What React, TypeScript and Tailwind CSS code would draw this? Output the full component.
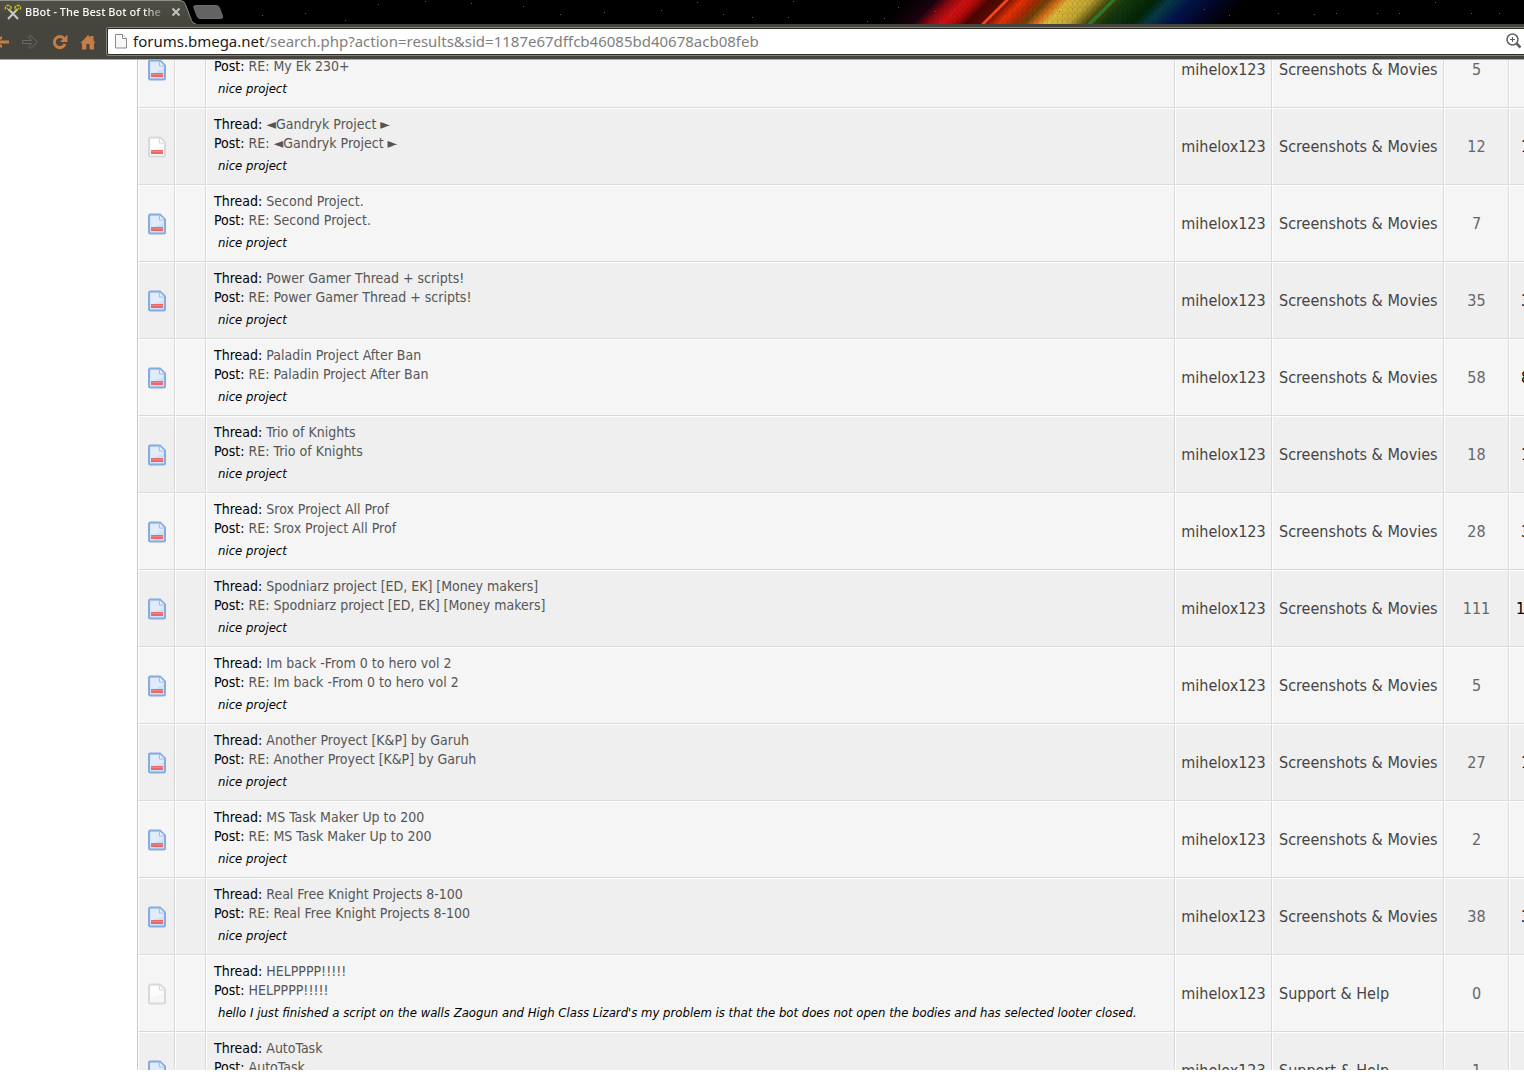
import { useState } from "react";
import { clsx } from "clsx";

type Icon = "hot" | "dotOld" | "old";

interface Result {
  title?: string;
  post: string;
  preview?: string;
  forum: string;
  replies: number;
  views?: string;
  strong?: boolean;
  icon: Icon;
}

const SM = "Screenshots & Movies";
const NP = "nice project";

const results: Result[] = [
  { post: "RE: My Ek 230+", preview: NP, forum: SM, replies: 5, icon: "hot" },
  { title: "◄Gandryk Project ►", post: "RE: ◄Gandryk Project ►", preview: NP, forum: SM, replies: 12, views: "1", icon: "dotOld" },
  { title: "Second Project.", post: "RE: Second Project.", preview: NP, forum: SM, replies: 7, icon: "hot" },
  { title: "Power Gamer Thread + scripts!", post: "RE: Power Gamer Thread + scripts!", preview: NP, forum: SM, replies: 35, views: "3", icon: "hot" },
  { title: "Paladin Project After Ban", post: "RE: Paladin Project After Ban", preview: NP, forum: SM, replies: 58, views: "8", icon: "hot" },
  { title: "Trio of Knights", post: "RE: Trio of Knights", preview: NP, forum: SM, replies: 18, views: "1", icon: "hot" },
  { title: "Srox Project All Prof", post: "RE: Srox Project All Prof", preview: NP, forum: SM, replies: 28, views: "3", icon: "hot" },
  { title: "Spodniarz project [ED, EK] [Money makers]", post: "RE: Spodniarz project [ED, EK] [Money makers]", preview: NP, forum: SM, replies: 111, views: "1", strong: true, icon: "hot" },
  { title: "Im back -From 0 to hero vol 2", post: "RE: Im back -From 0 to hero vol 2", preview: NP, forum: SM, replies: 5, icon: "hot" },
  { title: "Another Proyect [K&P] by Garuh", post: "RE: Another Proyect [K&P] by Garuh", preview: NP, forum: SM, replies: 27, views: "1", icon: "hot" },
  { title: "MS Task Maker Up to 200", post: "RE: MS Task Maker Up to 200", preview: NP, forum: SM, replies: 2, icon: "hot" },
  { title: "Real Free Knight Projects 8-100", post: "RE: Real Free Knight Projects 8-100", preview: NP, forum: SM, replies: 38, views: "3", icon: "hot" },
  {
    title: "HELPPPP!!!!!",
    post: "HELPPPP!!!!!",
    preview:
      "hello I just finished a script on the walls Zaogun and High Class Lizard's my problem is that the bot does not open the bodies and has selected looter closed.",
    forum: "Support & Help",
    replies: 0,
    icon: "old",
  },
  { title: "AutoTask", post: "AutoTask", forum: "Support & Help", replies: 1, icon: "hot" },
];

const stars = [
  [215, 8], [262, 15], [305, 13], [345, 20], [378, 4], [425, 1], [471, 3], [523, 6], [560, 14], [604, 12],
  [661, 10], [697, 2], [723, 14], [752, 17], [793, 1], [788, 17], [867, 21], [884, 18], [898, 7], [935, 11],
  [1011, 17], [1059, 11], [1204, 9], [1229, 15], [1278, 13], [1314, 14], [1336, 13], [1377, 13], [1399, 13],
  [1435, 2], [1471, 13], [1499, 13],
];

function Nebula() {
  return (
    <svg className="absolute inset-0 h-full w-full" aria-hidden="true">
      <defs>
        <linearGradient id="spectrum" x1="880" x2="1240" y1="0" y2="0" gradientUnits="userSpaceOnUse">
          <stop offset="0" stopColor="#000000" />
          <stop offset="0.09" stopColor="#1c0210" />
          <stop offset="0.13" stopColor="#8c0810" />
          <stop offset="0.17" stopColor="#d01014" />
          <stop offset="0.2" stopColor="#b80c08" />
          <stop offset="0.24" stopColor="#4a0503" />
          <stop offset="0.28" stopColor="#5a0c02" />
          <stop offset="0.33" stopColor="#e83006" />
          <stop offset="0.37" stopColor="#a02a05" />
          <stop offset="0.4" stopColor="#6a4408" />
          <stop offset="0.43" stopColor="#d06a18" />
          <stop offset="0.46" stopColor="#dcb838" />
          <stop offset="0.52" stopColor="#c0a433" />
          <stop offset="0.57" stopColor="#4a4a0c" />
          <stop offset="0.62" stopColor="#14380c" />
          <stop offset="0.7" stopColor="#032408" />
          <stop offset="0.74" stopColor="#063a48" />
          <stop offset="0.8" stopColor="#02144a" />
          <stop offset="0.87" stopColor="#020628" />
          <stop offset="0.95" stopColor="#000000" />
        </linearGradient>
        <pattern id="mesh" width="5" height="6" patternUnits="userSpaceOnUse">
          <path d="M0 0l2.500 3L5 0M2.500 3v3" fill="none" stroke="#000" strokeOpacity="0.1" />
        </pattern>
      </defs>
      <g transform="translate(24 0) skewX(-45)">
        <rect x="880" width="360" height="24" fill="url(#spectrum)" />
        <rect x="981" width="4" height="24" fill="#ff4420" />
        <rect x="1087" width="5" height="24" fill="#2f7a2a" />
      </g>
      <rect x="900" width="310" height="24" fill="url(#mesh)" />
      {stars.map(([x, y]) => (
        <rect key={`${x}-${y}`} x={x} y={y} width="1" height="1" fill="#5b5b5b" />
      ))}
    </svg>
  );
}

function PageIcon() {
  return (
    <svg width="12" height="16" viewBox="0 0 12 16" className="shrink-0" aria-hidden="true">
      <path d="M.5 1.500h7l4 4v9.500H.5z" fill="#f7f7f7" stroke="#8b8b8b" />
      <path d="M7.500 1.500v4h4" fill="#fff" stroke="#8b8b8b" />
    </svg>
  );
}

function ThreadIcon({ icon }: { icon: Icon }) {
  const blue = icon === "hot";
  return (
    <svg width="20" height="22" viewBox="0 0 20 22" className="mx-auto block" role="img" aria-label="Thread status">
      <path
        d="M3 1.500h10l5 5V19a1.500 1.500 0 0 1-1.500 1.500h-13A1.500 1.500 0 0 1 2 19V3a1.500 1.500 0 0 1 1-1.500z"
        fill={blue ? "#cfe1f9" : "#f6f6f6"}
        stroke={blue ? "#86abde" : "#d9d9d9"}
        strokeWidth="2"
      />
      <path d="M3.500 3h8v4.500h5V10L3.500 15z" fill="#fff" opacity={blue ? "0.35" : "0.8"} />
      <path d="M12.500 2v5h5" fill={blue ? "#e4effc" : "#fff"} stroke={blue ? "#a3c0e8" : "#d9d9d9"} />
      {icon !== "old" && (
        <>
          <rect x="4" y="14" width="12" height="4" fill="#e9686a" />
          <rect x="4" y="15" width="12" height="1" fill="#ee8384" />
        </>
      )}
    </svg>
  );
}

function TabStrip() {
  return (
    <div className="relative flex h-6 bg-black">
      <Nebula />
      <div className="relative h-6 w-[196px]">
        <svg className="absolute inset-0" width="196" height="24" aria-hidden="true">
          <defs>
            <linearGradient id="tab" x1="0" x2="0" y1="0" y2="1">
              <stop offset="0" stopColor="#4e4e46" />
              <stop offset="1" stopColor="#45453d" />
            </linearGradient>
          </defs>
          <path d="M0 .5h180q4 0 5.500 4l6 16q1.500 3.500 4.500 3.500H0z" fill="url(#tab)" />
          <path d="M0 .5h180q4 0 5.500 4l6 16q1.500 3.500 4.500 3.500" fill="none" stroke="#8f8f87" />
        </svg>
        <div className="relative flex h-6 items-center pl-1">
          <svg width="18" height="18" viewBox="0 0 18 18" className="shrink-0" aria-hidden="true">
            <path d="M4.500 6l9.500 10M13.500 6L4 16" stroke="#c9c9c9" strokeWidth="2" />
            <path d="M1.500 6.500V4L3 2.500h2.500L7 4v2L5 8M3 5.500h1M16.500 6.500V4L15 2.500h-2.500L11 4v2l2 2M14 5.500h1" fill="none" stroke="#c4c01c" strokeWidth="1.500" strokeDasharray="3 1" />
          </svg>
          <span className="ml-[3px] w-[138px] overflow-hidden whitespace-nowrap bg-gradient-to-r from-white from-85% to-[#77776f] bg-clip-text font-['Open_Sans',sans-serif] text-[11px] font-semibold text-transparent">
            BBot - The Best Bot of the
          </span>
          <button type="button" aria-label="Close tab" className="ml-2 flex size-[10px] items-center justify-center">
            <svg width="10" height="10" viewBox="0 0 10 10" aria-hidden="true">
              <path d="M1.500 1.500l7 7M8.500 1.500l-7 7" stroke="#c4c4be" strokeWidth="2" />
            </svg>
          </button>
        </div>
      </div>
      <button type="button" aria-label="New tab" className="relative mt-[5px] -ml-[3px] h-[14px] w-[31px]">
        <svg width="31" height="14" aria-hidden="true">
          <path d="M2.500.5h21q2 0 3 2.500l3 8q.5 2.500-1.500 2.500H7q-2 0-3-2.500L.8 2.500Q.5.5 2.500.5z" fill="#636363" stroke="#6c6c6c" />
        </svg>
      </button>
    </div>
  );
}

function Toolbar() {
  const [path, setPath] = useState("/search.php?action=results&sid=1187e67dffcb46085bd40678acb08feb");

  return (
    <div className="flex h-9 border-b border-[#a9a9a2] bg-[#45453d] pt-[3px] pb-[3px]">
      <div className="flex w-[106px] shrink-0 items-center">
        <button type="button" aria-label="Back" className="w-[21px]">
          <svg width="10" height="16" viewBox="0 0 10 16" aria-hidden="true">
            <path d="M0 8h9M0 3l-5 5 5 5" fill="none" stroke="#c77c45" strokeWidth="3" />
            <path d="M0 3l2-1v3L0 6zM0 10l2 1v3l-2-1z" fill="#c77c45" />
          </svg>
        </button>
        <button type="button" aria-label="Forward" className="w-[30px]">
          <svg width="18" height="16" viewBox="0 0 18 16" aria-hidden="true">
            <path d="M1.500 6.500h9L7.500 3l2-1.500L16.500 8l-7 6.500-2-1.500 3-3.500h-9z" fill="none" stroke="#6a6a62" />
          </svg>
        </button>
        <button type="button" aria-label="Reload" className="w-[29px]">
          <svg width="18" height="18" viewBox="0 0 18 18" aria-hidden="true">
            <path d="M13 5.500A5.500 5.500 0 1 0 14 11" fill="none" stroke="#c77c45" strokeWidth="3" />
            <path d="M16.500 1.500v7.500H9z" fill="#c77c45" />
          </svg>
        </button>
        <button type="button" aria-label="Home">
          <svg width="16" height="18" viewBox="0 0 16 18" aria-hidden="true">
            <path d="M8 2l2.500 2.500V3h3v4.500L15.500 10H14v6.500H9.500V11h-3v5.500H2V10H.5z" fill="#c77c45" />
          </svg>
        </button>
      </div>
      <div className="flex flex-1 rounded-l-[3px] border border-r-0 border-[#85857d]">
        <div className="flex flex-1 items-center rounded-l-[2px] border border-r-0 border-[#2b2b26] bg-white pr-[2px] pb-[2px] pl-[7px] font-['Noto_Sans',sans-serif] text-[15px] leading-5">
          <PageIcon />
          <label htmlFor="address" className="ml-[6px] text-[#1c1c1c]">
            forums.bmega.net
          </label>
          <input
            id="address"
            value={path}
            onChange={(e) => setPath(e.target.value)}
            className="h-5 min-w-0 flex-1 bg-transparent text-[#808080] outline-none"
          />
          <button type="button" aria-label="Zoom">
            <svg width="16" height="16" viewBox="0 0 16 16" aria-hidden="true">
              <circle cx="6.500" cy="6.500" r="5.500" fill="none" stroke="#606060" strokeWidth="1.500" />
              <path d="M4 6.500h5M6.500 4v5" stroke="#606060" />
              <path d="M10.500 10.500l4 4" stroke="#606060" strokeWidth="2.500" />
            </svg>
          </button>
        </div>
      </div>
    </div>
  );
}

const cell = "border-t border-r border-b border-l border-t-white border-l-white border-r-[#d9d9d9] border-b-[#d9d9d9] p-0";

function ResultRow({ result, odd }: { result: Result; odd: boolean }) {
  const shade = odd ? "bg-[#efefef]" : "bg-[#f5f5f5]";
  return (
    <tr className="h-[77px]">
      <td className={clsx(cell, shade)}>
        <ThreadIcon icon={result.icon} />
      </td>
      <td className={clsx(cell, shade)} />
      <td className={clsx(cell, shade, "pl-[7px]! align-top whitespace-nowrap")}>
        <div className="pt-[6px] text-[14px] leading-[19px] text-black">
          <div className="h-[19px]">
            {result.title && (
              <>
                Thread: <a href="#thread" className="text-[#555]">{result.title}</a>
              </>
            )}
          </div>
          <div className="h-[19px]">
            Post: <a href="#post" className="text-[#555]">{result.post}</a>
          </div>
          {result.preview && <em className="mt-[3px] block pl-1 text-[13px]">{result.preview}</em>}
        </div>
      </td>
      <td className={clsx(cell, shade, "text-center")}>
        <a href="#user">mihelox123</a>
      </td>
      <td className={clsx(cell, shade, "pl-[6px]! whitespace-nowrap")}>
        <a href="#forum">{result.forum}</a>
      </td>
      <td className={clsx(cell, shade, "text-center")}>
        <a href="#replies" className="text-[#666]">{result.replies}</a>
      </td>
      <td className={clsx(cell, shade, "text-black", result.strong ? "pl-[6px]!" : "pl-[11px]!")}>{result.views}</td>
    </tr>
  );
}

export default function App() {
  return (
    <div className="flex h-screen flex-col overflow-hidden bg-white pb-[2px]">
      <header className="shrink-0">
        <TabStrip />
        <Toolbar />
      </header>
      <main className="min-h-0 flex-1 overflow-hidden pl-[137px] font-['DejaVu_Sans_Condensed','DejaVu_Sans',sans-serif]">
        {/* the list is scrolled part way into its first row */}
        <table className="-mt-[29px] w-[calc(100%+38px)] table-fixed border-separate border-spacing-0 border-l border-[#c8c8c8] text-[16px] text-[#444]">
          <colgroup>
            <col className="w-[37px]" />
            <col className="w-[31px]" />
            <col />
            <col className="w-[97px]" />
            <col className="w-[172px]" />
            <col className="w-[65px]" />
            <col className="w-[53px]" />
          </colgroup>
          <tbody>
            {results.map((r, i) => (
              <ResultRow key={r.post} result={r} odd={i % 2 === 1} />
            ))}
          </tbody>
        </table>
      </main>
    </div>
  );
}
